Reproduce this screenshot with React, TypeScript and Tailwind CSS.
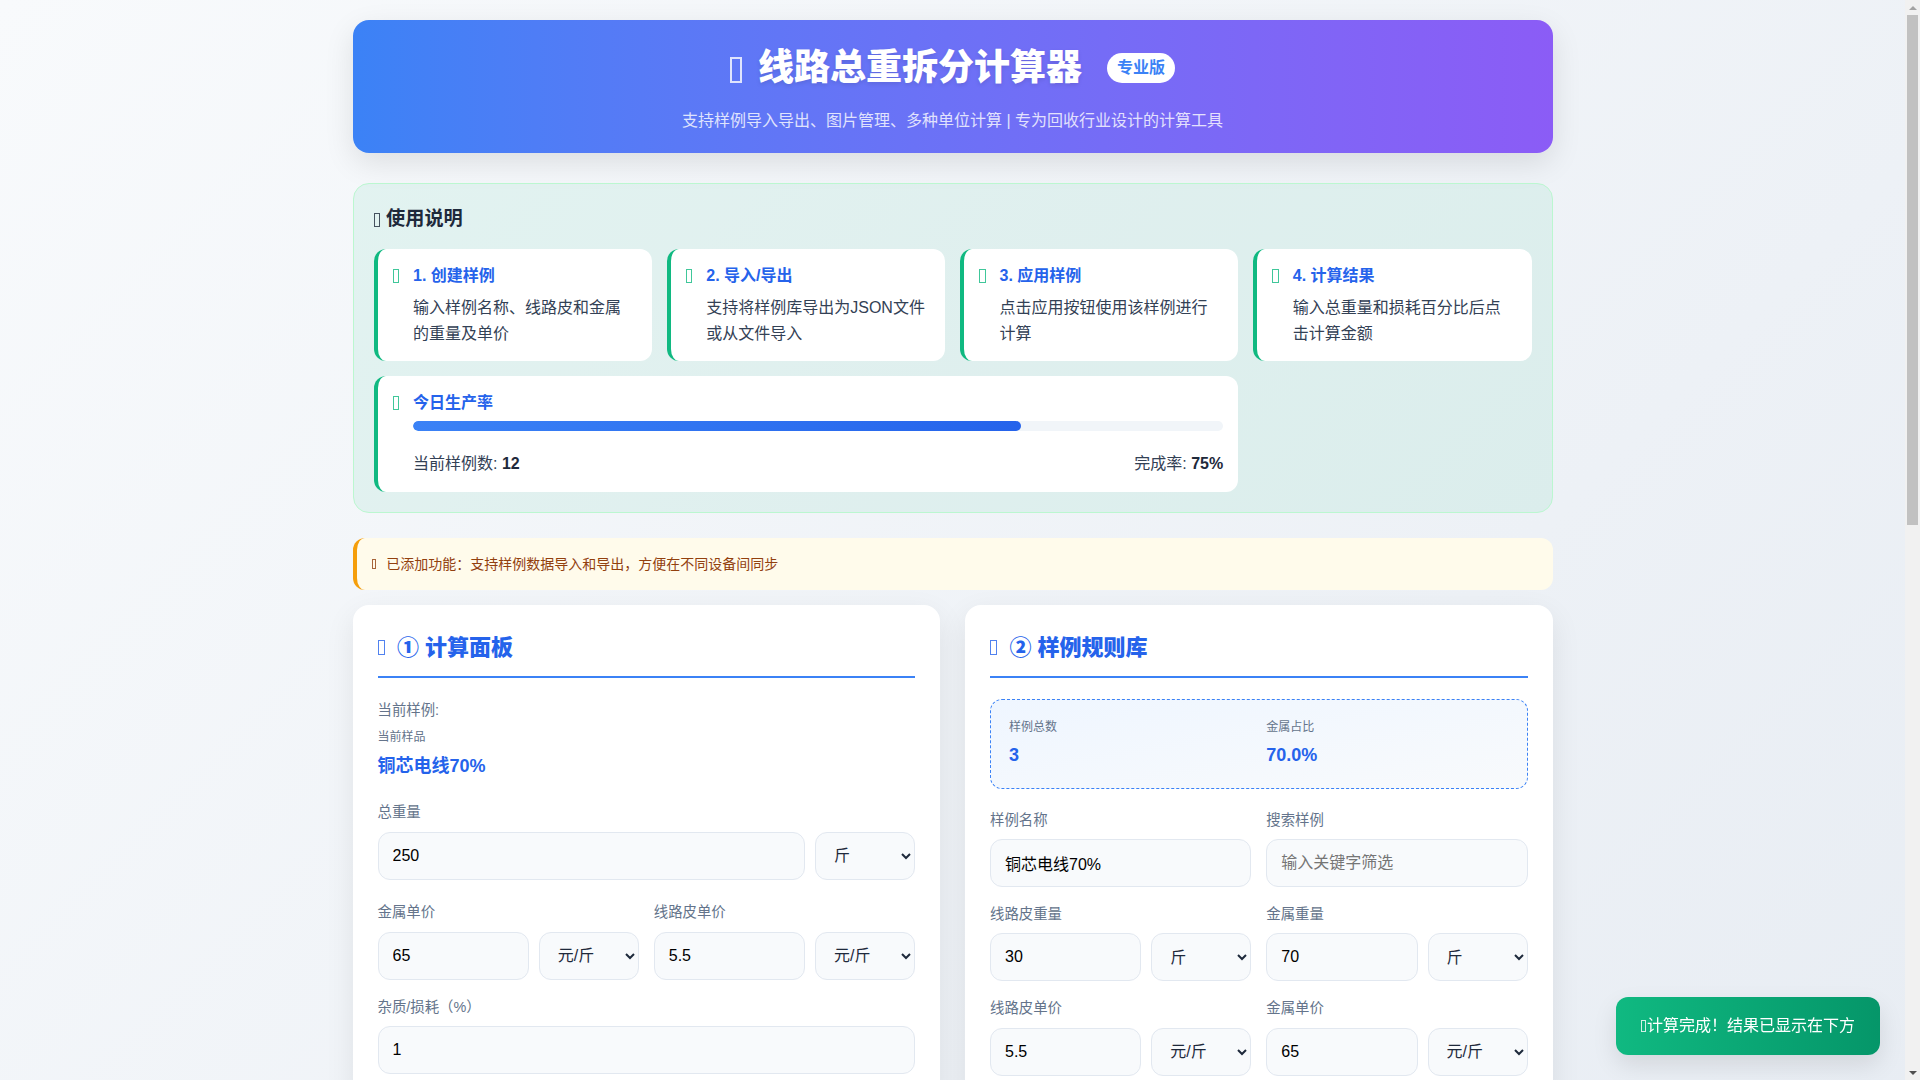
// 线路总重拆分计算器
import type { ReactNode } from 'react';

const fieldClass =
  'h-12 w-full min-w-0 rounded-xl border border-[#e2e8f0] bg-[#f8fafc] px-[14px] text-base text-black outline-none placeholder:text-[#757575]';
const selectClass =
  'h-12 w-[100px] shrink-0 rounded-xl border border-[#e2e8f0] bg-[#f8fafc] px-[14px] text-base text-[#1e293b] outline-none';

const steps = [
  { title: '1. 创建样例', text: '输入样例名称、线路皮和金属的重量及单价' },
  { title: '2. 导入/导出', text: '支持将样例库导出为JSON文件或从文件导入' },
  { title: '3. 应用样例', text: '点击应用按钮使用该样例进行计算' },
  { title: '4. 计算结果', text: '输入总重量和损耗百分比后点击计算金额' },
];

// 原页面的 emoji 在截图里没有字形，显示成细长方框
function Tofu({ className }: { className?: string }) {
  return <span className={'inline-block h-[0.7em] w-[0.34em] shrink-0 border-[0.06em] border-current align-[-0.08em] font-normal opacity-80 ' + (className ?? '')} />;
}

function Field({ label, children, className }: { label: string; children: ReactNode; className?: string }) {
  return (
    <div className={className}>
      <label className="mb-2 block text-[14.4px] leading-[21.6px] text-[#64748b]">{label}</label>
      {children}
    </div>
  );
}

function UnitField({ label, value, unit }: { label: string; value: string; unit: string }) {
  return (
    <Field label={label}>
      <div className="flex gap-2.5">
        <input className={fieldClass} defaultValue={value} />
        <select className={selectClass} defaultValue={unit}>
          <option>{unit}</option>
        </select>
      </div>
    </Field>
  );
}

function PanelTitle({ text, className }: { text: string; className?: string }) {
  return (
    <h2 className={'flex items-center gap-3 border-b-2 border-[#3b82f6] pt-px pb-[11px] text-[22px] font-extrabold leading-[34px] text-[#2563eb] ' + (className ?? '')}>
      <Tofu />
      {text}
    </h2>
  );
}

function StepIcon() {
  return (
    <span className="w-[20.5px] shrink-0 text-[19.2px] leading-[22px] text-[#10b981]">
      <Tofu />
    </span>
  );
}

function Scrollbar() {
  return (
    <div className="fixed inset-y-0 right-0 flex w-[15px] flex-col bg-[#f1f1f1]">
      <div className="flex h-[15px] items-center justify-center">
        <div className="h-0 w-0 border-x-[4px] border-b-[4px] border-x-transparent border-b-[#a3a3a3]" />
      </div>
      <div className="mx-[2px] h-[510px] bg-[#c1c1c1]" />
      <div className="flex-1" />
      <div className="flex h-[15px] items-center justify-center">
        <div className="h-0 w-0 border-x-[4px] border-t-[4px] border-x-transparent border-t-[#505050]" />
      </div>
    </div>
  );
}

export default function App() {
  return (
    <div className="min-h-[2218px] bg-[linear-gradient(135deg,#f8fafc,#e2e8f0)] pr-[15px] font-['Liberation_Sans','Noto_Sans_CJK_SC',sans-serif] text-[#1e293b]">
      <div className="mx-auto w-[1200px] py-5">
        {/* 头部 */}
        <header className="mb-[30px] h-[133px] rounded-2xl bg-gradient-to-r from-[#3b82f6] to-[#8b5cf6] pt-[21px] text-center text-white shadow-[0_10px_30px_rgba(0,0,0,0.1)]">
          <h1 className="flex items-center justify-center text-[36px] font-extrabold leading-[54px] [text-shadow:0_2px_4px_rgba(0,0,0,0.1)]">
            <Tofu className="mr-4 mt-1" />
            线路总重拆分计算器
            <span className="ml-[25px] rounded-[20px] bg-white px-2.5 py-[3px] text-base font-bold leading-6 text-[#3b82f6] [text-shadow:none]">专业版</span>
          </h1>
          <p className="mt-[14px] text-base leading-6 opacity-80">支持样例导入导出、图片管理、多种单位计算 | 专为回收行业设计的计算工具</p>
        </header>

        {/* 使用说明 */}
        <section className="mb-[25px] rounded-2xl border border-[#bbf7d0] bg-[#10b981]/[0.08] p-5">
          <h3 className="mb-4 text-[19.2px] font-bold leading-[29px] text-[#1e293b]"><Tofu className="mr-[6px]" />使用说明</h3>
          <div className="grid grid-cols-4 gap-[15px]">
            {steps.map((s) => (
              <div key={s.title} className="flex rounded-xl border-l-4 border-[#10b981] bg-white p-[15px]">
                <StepIcon />
                <div className="pr-[2px]">
                  <h4 className="mb-[7px] text-base font-bold leading-6 text-[#2563eb]">{s.title}</h4>
                  <p className="text-base leading-[25.6px] text-[#334155]">{s.text}</p>
                </div>
              </div>
            ))}
            <div className="col-span-3 flex rounded-xl border-l-4 border-[#10b981] bg-white p-[15px]">
              <StepIcon />
              <div className="flex-1">
                <h4 className="mb-[6px] text-base font-bold leading-6 text-[#2563eb]">今日生产率</h4>
                <div className="h-2.5 overflow-hidden rounded-md bg-[#f1f5f9]">
                  <div className="h-full w-3/4 rounded-md bg-gradient-to-r from-[#3b82f6] to-[#2563eb]" />
                </div>
                <div className="mt-5 flex justify-between text-base leading-[25.6px] text-[#334155]">
                  <span>当前样例数: <b className="text-[#1e293b]">12</b></span>
                  <span>完成率: <b className="text-[#1e293b]">75%</b></span>
                </div>
              </div>
            </div>
          </div>
        </section>

        {/* 提示 */}
        <div className="mb-[15px] flex h-[52px] items-center gap-[10px] rounded-xl border-l-4 border-[#f59e0b] bg-[#fffbeb] px-[15px] text-sm text-[#92400e]">
          <Tofu />
          已添加功能：支持样例数据导入和导出，方便在不同设备间同步
        </div>

        <div className="grid grid-cols-2 gap-[25px]">
          {/* 计算面板 */}
          <section className="rounded-2xl bg-white p-[25px] shadow-[0_10px_30px_rgba(0,0,0,0.08)]">
            <PanelTitle text="① 计算面板" className="mb-[22px]" />
            <div className="text-[14.4px] leading-[21.6px] text-[#64748b]">当前样例:</div>
            <div className="mt-[7px] text-xs leading-[18px] text-[#64748b]">当前样品</div>
            <div className="mt-[7px] text-lg font-bold leading-[27px] text-[#2563eb]">铜芯电线70%</div>
            <Field label="总重量" className="mt-[22px]">
              <div className="flex gap-2.5">
                <input className={fieldClass} defaultValue="250" />
                <select className={selectClass} defaultValue="斤">
                  <option>斤</option>
                </select>
              </div>
            </Field>
            <div className="mt-[22px] grid grid-cols-2 gap-[15px]">
              <UnitField label="金属单价" value="65" unit="元/斤" />
              <UnitField label="线路皮单价" value="5.5" unit="元/斤" />
            </div>
            <Field label="杂质/损耗（%）" className="mt-[17px]">
              <input className={fieldClass} defaultValue="1" />
            </Field>
          </section>

          {/* 样例规则库 */}
          <section className="rounded-2xl bg-white p-[25px] shadow-[0_10px_30px_rgba(0,0,0,0.08)]">
            <PanelTitle text="② 样例规则库" className="mb-[21px]" />
            <div className="grid grid-cols-2 gap-[15px] rounded-xl border border-dashed border-[#3b82f6] bg-gradient-to-br from-[#eff6ff] to-[#f8fafc] px-[18px] pt-[18px] pb-[19px]">
              <div>
                <div className="text-xs leading-[18px] text-[#64748b]">样例总数</div>
                <div className="mt-1.5 text-lg font-bold leading-[27px] text-[#2563eb]">3</div>
              </div>
              <div>
                <div className="text-xs leading-[18px] text-[#64748b]">金属占比</div>
                <div className="mt-1.5 text-lg font-bold leading-[27px] text-[#2563eb]">70.0%</div>
              </div>
            </div>
            <div className="mt-[21px] grid grid-cols-2 gap-x-[15px] gap-y-[16.5px]">
              <Field label="样例名称"><input className={fieldClass} defaultValue="铜芯电线70%" /></Field>
              <Field label="搜索样例"><input className={fieldClass} placeholder="输入关键字筛选" /></Field>
              <UnitField label="线路皮重量" value="30" unit="斤" />
              <UnitField label="金属重量" value="70" unit="斤" />
              <UnitField label="线路皮单价" value="5.5" unit="元/斤" />
              <UnitField label="金属单价" value="65" unit="元/斤" />
            </div>
          </section>
        </div>
      </div>

      {/* 提示浮层 */}
      <div className="fixed bottom-[25px] right-[40px] flex h-[58px] items-center rounded-xl bg-gradient-to-r from-[#10b981] to-[#059669] px-[25px] text-base text-white shadow-[0_10px_25px_rgba(0,0,0,0.1)]">
        <Tofu className="mr-px" />计算完成！结果已显示在下方
      </div>

      <Scrollbar />
    </div>
  );
}
